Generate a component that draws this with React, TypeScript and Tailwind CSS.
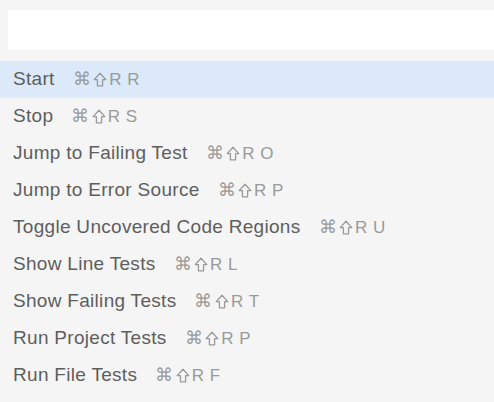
import React from 'react';

const commands = [
  { name: 'Start', keys: 'R R' },
  { name: 'Stop', keys: 'R S' },
  { name: 'Jump to Failing Test', keys: 'R O' },
  { name: 'Jump to Error Source', keys: 'R P' },
  { name: 'Toggle Uncovered Code Regions', keys: 'R U' },
  { name: 'Show Line Tests', keys: 'R L' },
  { name: 'Show Failing Tests', keys: 'R T' },
  { name: 'Run Project Tests', keys: 'R P' },
  { name: 'Run File Tests', keys: 'R F' },
];

const ShiftIcon = () => (
  <svg width="14" height="15" viewBox="0 0 14 15" className="mx-[2px]">
    <path
      d="M7 1.2 L12.8 7.6 H9.6 V13.8 H4.4 V7.6 H1.2 Z"
      fill="none"
      stroke="currentColor"
      strokeWidth="1.3"
      strokeLinejoin="round"
    />
  </svg>
);

const App: React.FC = () => {
  return (
    <div
      className="w-[494px] h-[402px] bg-[#f5f5f5] overflow-hidden"
      style={{ fontFamily: '"Helvetica Neue", "Liberation Sans", Arial, sans-serif' }}
    >
      <div className="pt-[10px] pl-2 pb-[11px]">
        <div className="h-[40px] bg-white"></div>
      </div>

      <ul>
        {commands.map((c, i) => (
          <li
            key={c.name}
            className={`h-[37px] flex items-center pl-[13px] ${i === 0 ? 'bg-[#dbe9f9]' : ''}`}
          >
            <span className="text-[19px] text-[#5e5e5e] tracking-[0.3px]">{c.name}</span>
            <span className="ml-[18px] flex items-center text-[17px] text-[#9a9a9a] tracking-[0.5px]">
              <span className="text-[18px]">⌘</span>
              <ShiftIcon />
              <span>{c.keys}</span>
            </span>
          </li>
        ))}
      </ul>
    </div>
  );
};

export default App;
